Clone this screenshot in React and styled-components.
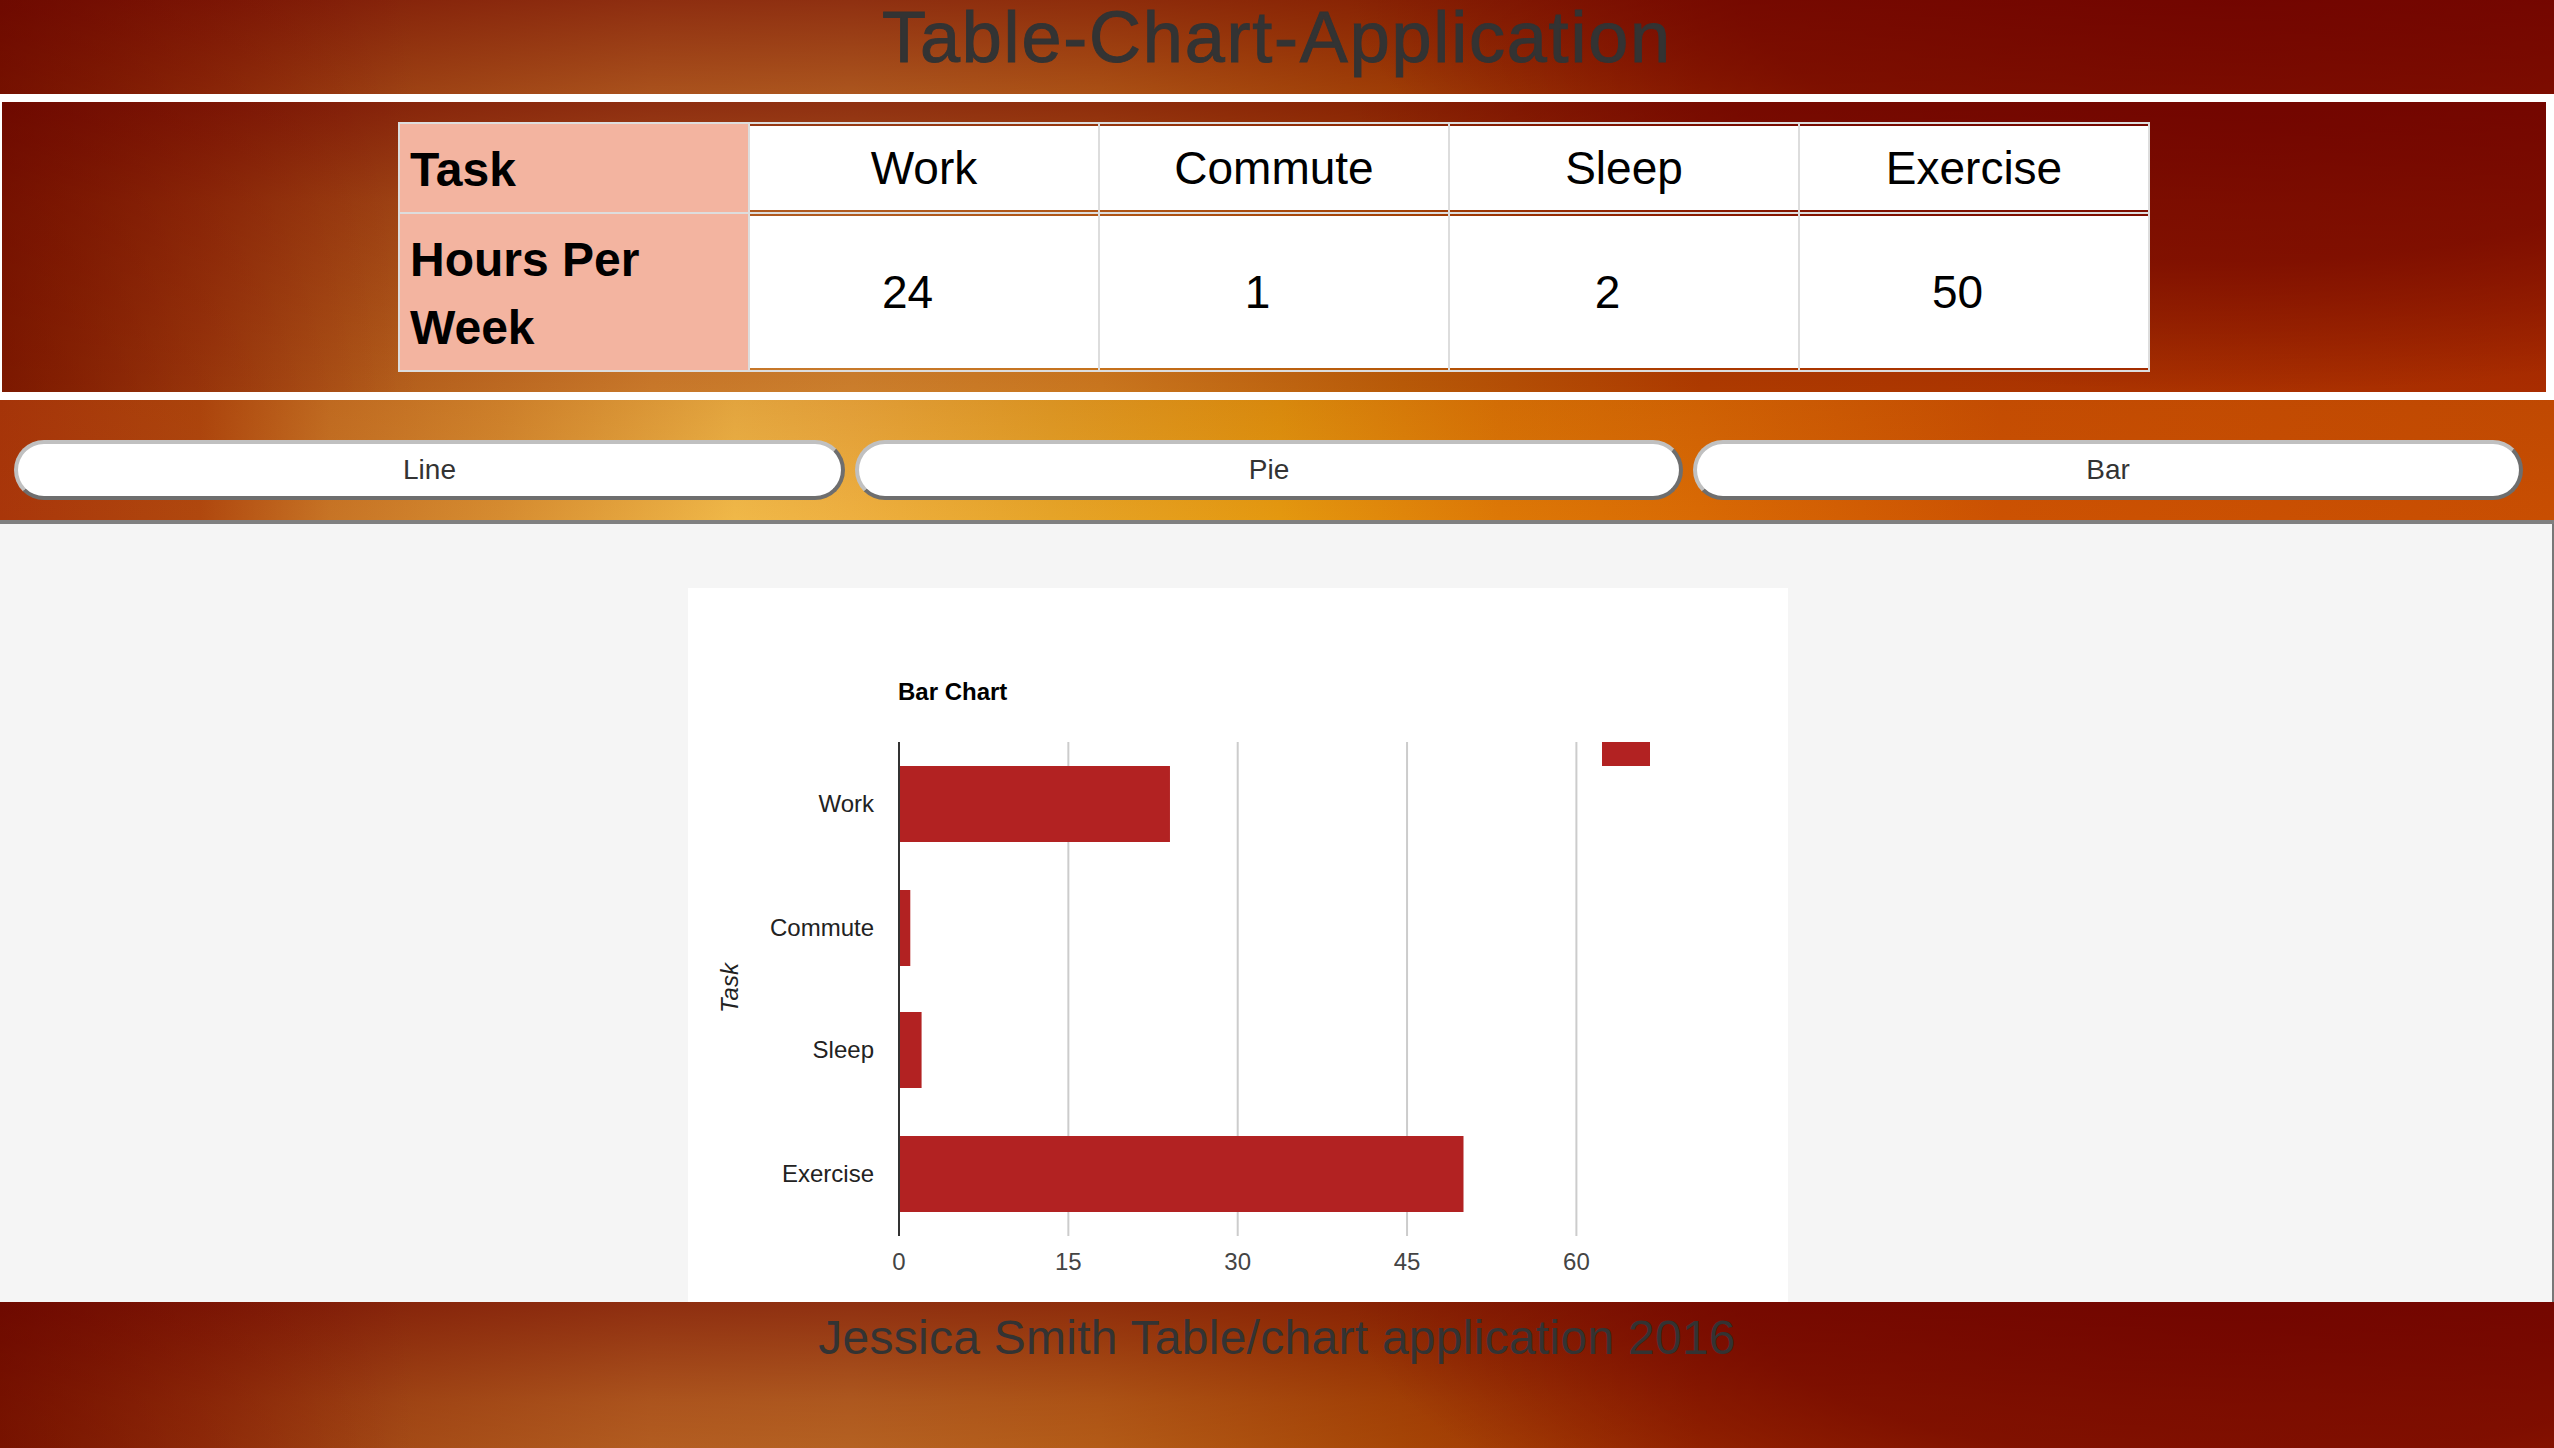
import styled, { createGlobalStyle, css } from "styled-components"

const GlobalStyle = createGlobalStyle`
  html, body {
    margin: 0;
    padding: 0;
    background: #fff;
    font-family: "Liberation Sans", Arial, sans-serif;
  }
`

// the site uses one photo of embers, approximated with stacked gradients
const ember = css`
  background-color: #8a1000;
  background-image:
    radial-gradient(ellipse 880px 290px at 2230px 0, rgba(108, 0, 0, 0.72) 0, rgba(108, 0, 0, 0.58) 55%, rgba(108, 0, 0, 0) 100%),
    linear-gradient(to right, rgba(92, 0, 0, 0.32) 0, rgba(92, 0, 0, 0.14) 180px, rgba(92, 0, 0, 0) 420px),
    linear-gradient(to bottom, rgba(106, 0, 0, 0.62) 0, rgba(106, 0, 0, 0.3) 100px, rgba(106, 0, 0, 0) 290px),
    linear-gradient(to right, #8c2400 0, #a03c0c 200px, #b5601c 400px, #c8782a 650px, #cb7e2c 850px, #c9761e 1100px, #b85a08 1400px, #ad3a00 1700px, #a92c00 2554px);
  background-repeat: no-repeat;
  background-size: 2554px 292px;
`

const Page = styled.div`
  display: flex;
  flex-direction: column;
  width: 2554px;
  height: 1448px;
  overflow: hidden;
`

const Header = styled.header`
  ${ember}
  height: 94px;
  flex: none;
  text-align: center;
  & h1 {
    margin: 0;
    font-size: 72px;
    font-weight: 400;
    line-height: 74px;
    letter-spacing: 1.8px;
    color: #333;
    -webkit-text-stroke: 1px #333;
  }
`

const TablePanel = styled.section`
  ${ember}
  flex: none;
  margin: 8px 8px 0 2px;
  padding: 20px 0;
`

const DataTable = styled.table`
  width: 1752px;
  margin: 0 auto;
  table-layout: fixed;
  border-collapse: separate;
  border-spacing: 0;
  font-size: 46px;
  line-height: 68px;
  color: #000;
`

const Column = styled.col`
  width: ${(props) => (props.$last ? "352px" : "350px")};
`

const Cell = styled.td`
  padding: 10px;
  padding-right: ${(props) => (props.$value ? "43px" : "10px")};
  border-top: 2px solid #ddd;
  border-left: 2px solid #ddd;
  text-align: center;
  background: linear-gradient(#fff, #fff) center / 100% calc(100% - 4px) no-repeat;
  background-origin: padding-box;
  background-clip: padding-box;
  &:last-child {
    border-right: 2px solid #ddd;
  }
  tr:last-child > & {
    border-bottom: 2px solid #ddd;
  }
`

const HeadCell = styled.th`
  padding: 12px 10px 8px;
  border-top: 2px solid #ddd;
  border-left: 2px solid #ddd;
  background: #f3b4a0;
  text-align: left;
  font-size: 48px;
  font-weight: 700;
  tr:last-child > & {
    border-bottom: 2px solid #ddd;
  }
`

const ChartNav = styled.nav`
  flex: none;
  box-sizing: border-box;
  height: 124px;
  margin-top: 8px;
  padding: 40px 31px 0 14px;
  border-bottom: 4px solid #808080;
  background:
    linear-gradient(to bottom, rgba(140, 40, 0, 0.14), rgba(140, 40, 0, 0)),
    linear-gradient(to right, #a9360a 0, #b0480e 200px, #c77425 330px, #d68c30 500px, #f0b848 735px, #eeb040 850px, #e6a428 1050px, #e4980f 1280px, #dd7806 1500px, #d96a04 1700px, #cc5202 2000px, #c84e02 2554px);
  display: grid;
  grid-template-columns: 831px 828px 830px;
  column-gap: 10px;
  align-items: start;
`

const ChartButton = styled.button`
  height: 60px;
  padding: 0;
  border: 4px solid;
  border-color: #c0c0c0 #6e6e6e #6e6e6e #c0c0c0;
  border-radius: 30px;
  background: #fff;
  color: #333;
  font-family: inherit;
  font-size: 28px;
`

const Main = styled.main`
  flex: none;
  box-sizing: border-box;
  height: 778px;
  padding: 64px 0 0 688px;
  background: #f5f5f5;
  border-right: 2px solid #777;
  overflow: hidden;
`

const ChartCard = styled.div`
  width: 1100px;
  height: 800px;
  background: #fff;
`

const Footer = styled.footer`
  ${ember}
  flex: 1;
  text-align: center;
  font-size: 48px;
  line-height: 52px;
  letter-spacing: 0.27px;
  padding-top: 10px;
  color: #333;
`

const tasks = [
  { name: "Work", hours: 24, top: 178 },
  { name: "Commute", hours: 1, top: 302 },
  { name: "Sleep", hours: 2, top: 424 },
  { name: "Exercise", hours: 50, top: 548 },
]

const AXIS_X = 211
const UNIT = 11.29

const BarChart = () => (
  <svg width="1100" height="800" fontFamily="'Liberation Sans', Arial, sans-serif" fontSize="24">
    <text x="210" y="112" fontWeight="700" fill="#000">Bar Chart</text>
    {[15, 30, 45, 60].map((v) => (
      <rect key={v} x={AXIS_X + v * UNIT - 1} y="154" width="2" height="494" fill="#ccc" />
    ))}
    {tasks.map((t) => (
      <g key={t.name}>
        <rect x={AXIS_X} y={t.top} width={t.hours * UNIT} height="76" fill="#b22222" />
        <text x="186" y={t.top + 46} textAnchor="end" fill="#222">{t.name}</text>
      </g>
    ))}
    <rect x={AXIS_X - 1} y="154" width="2" height="494" fill="#333" />
    {[0, 15, 30, 45, 60].map((v) => (
      <text key={v} x={AXIS_X + v * UNIT} y="682" textAnchor="middle" fill="#444">{v}</text>
    ))}
    <rect x="914" y="154" width="48" height="24" fill="#b22222" />
    <text transform="translate(50 400) rotate(-90)" textAnchor="middle" fontStyle="italic" fill="#222">Task</text>
  </svg>
)

const App = () => {
  return (
    <Page>
      <GlobalStyle />
      <Header>
        <h1>Table-Chart-Application</h1>
      </Header>
      <TablePanel>
        <DataTable>
          <colgroup>
            <Column />
            <Column />
            <Column />
            <Column />
            <Column $last />
          </colgroup>
          <tbody>
            <tr>
              <HeadCell>Task</HeadCell>
              {tasks.map((t) => <Cell key={t.name}>{t.name}</Cell>)}
            </tr>
            <tr>
              <HeadCell>Hours Per Week</HeadCell>
              {tasks.map((t) => <Cell key={t.name} $value>{t.hours}</Cell>)}
            </tr>
          </tbody>
        </DataTable>
      </TablePanel>
      <ChartNav>
        <ChartButton>Line</ChartButton>
        <ChartButton>Pie</ChartButton>
        <ChartButton>Bar</ChartButton>
      </ChartNav>
      <Main>
        <ChartCard>
          <BarChart />
        </ChartCard>
      </Main>
      <Footer>Jessica Smith Table/chart application 2016</Footer>
    </Page>
  )
}

export default App
